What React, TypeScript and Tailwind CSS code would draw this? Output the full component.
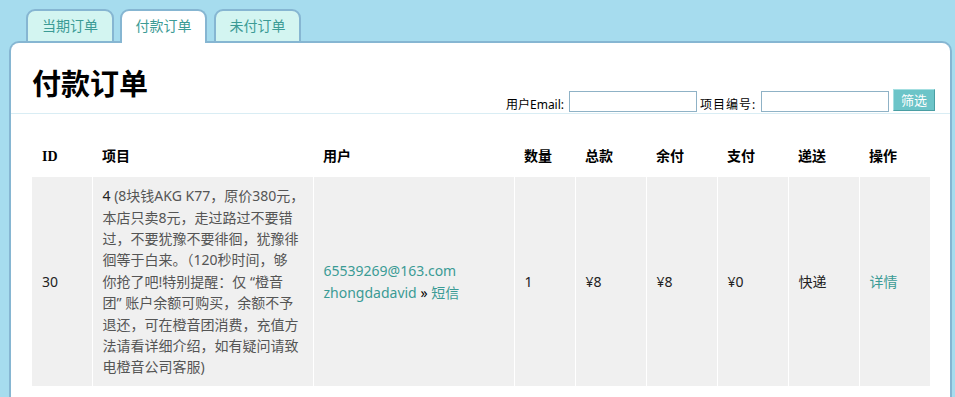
const tabs = [
  { label: "当期订单", active: false, w: "w-[88px]" },
  { label: "付款订单", active: true, w: "w-[87px]" },
  { label: "未付订单", active: false, w: "w-[87px]" },
];

const headers = ["ID", "项目", "用户", "数量", "总款", "余付", "支付", "递送", "操作"];
const widths = ["60px", "221px", "201px", "61px", "71px", "71px", "71px", "71px", "71px"];

const itemLines = [
  "本店只卖8元，走过路过不要错",
  "过，不要犹豫不要徘徊，犹豫徘",
  "徊等于白来。（120秒时间，够",
  "你抢了吧!特别提醒：仅 “橙音",
  "团” 账户余额可购买，余额不予",
  "退还，可在橙音团消费，充值方",
  "法请看详细介绍，如有疑问请致",
  "电橙音公司客服)",
];

const App = () => {
  return (
    <div className="min-h-[397px] bg-[#a6dcee] font-['Noto_Sans','Noto_Sans_CJK_SC',sans-serif] overflow-hidden">
      <div className="relative z-10 flex pl-[26px] pt-[9px] gap-[6px]">
        {tabs.map((t, i) => (
          <div
            key={t.label}
            className={`${t.w} ${i === 2 ? "ml-[1px]" : ""} h-[34px] -mb-[2px] rounded-t-[9px] border-2 border-[#86b6d2] flex items-center justify-center text-[14px] text-[#3b9b95] pb-[1px] ${
              t.active ? "bg-white border-b-0 pb-[3px]" : "bg-[#d3f5f1]"
            }`}
          >
            {t.label}
          </div>
        ))}
      </div>

      <div className="ml-[9px] mr-[3px] min-h-[360px] bg-white border-2 border-b-0 border-[#86b6d2] rounded-t-[10px]">
        <div className="h-[71px] flex justify-between border-b border-[#d9edf4]">
          <h1 className="pl-[21px] pt-[22px] text-[29px] leading-[34px] font-bold text-black font-['Noto_Sans_CJK_SC',serif]">
            付款订单
          </h1>
          <div className="flex items-end pb-[1px] pr-[15px] text-[12px] leading-[14px] text-black">
            <span className="w-[57px] whitespace-nowrap">用户Email:</span>
            <input className="ml-[6px] w-[128px] h-[21px] border border-[#8fb2c6] bg-white outline-none" />
            <span className="ml-[3px] w-[57px] whitespace-nowrap tracking-[1px]">项目编号:</span>
            <input className="ml-[4px] w-[128px] h-[21px] border border-[#8fb2c6] bg-white outline-none" />
            <button className="ml-[4px] mb-[1px] w-[42px] h-[22px] bg-[#6cc4c8] text-white text-[13px] border border-t-[#a4dfe1] border-l-[#a4dfe1] border-r-[#4a9ea3] border-b-[#4a9ea3]">
              筛选
            </button>
          </div>
        </div>

        <table className="ml-[21px] mt-[21px] table-fixed border-collapse w-[898px] text-[14px]">
          <colgroup>
            {widths.map((w, i) => (
              <col key={i} style={{ width: w }} />
            ))}
          </colgroup>
          <thead>
            <tr className="h-[42px]">
              {headers.map((h) => (
                <th
                  key={h}
                  className="text-left pl-[10px] font-bold text-black font-['Liberation_Serif','Noto_Sans_CJK_SC',serif] text-[14px]"
                >
                  {h}
                </th>
              ))}
            </tr>
          </thead>
          <tbody>
            <tr className="bg-[#f0f0f0] h-[209px] align-middle text-[#222]">
              <td className="pl-[10px]">30</td>
              <td className="pl-[10px] py-[8px] border-l border-white text-[#555] whitespace-nowrap">
                <div className="h-[21.4px] leading-[21.4px]">
                  <span className="text-[#222]">4</span> (8块钱AKG K77，原价380元，
                </div>
                {itemLines.map((l, i) => (
                  <div key={i} className="h-[21.4px] leading-[21.4px]">
                    {l}
                  </div>
                ))}
              </td>
              <td className="pl-[10px] border-l border-white leading-[22px]">
                <a className="text-[#3b9b95]">65539269@163.com</a>
                <br />
                <a className="text-[#3b9b95]">zhongdadavid</a> <span className="text-black">»</span>{" "}
                <a className="text-[#3b9b95]">短信</a>
              </td>
              <td className="pl-[10px] border-l border-white">1</td>
              <td className="pl-[10px] border-l border-white">¥8</td>
              <td className="pl-[10px] border-l border-white">¥8</td>
              <td className="pl-[10px] border-l border-white">¥0</td>
              <td className="pl-[10px] border-l border-white text-[#222]">快递</td>
              <td className="pl-[10px] border-l border-white">
                <a className="text-[#3b9b95]">详情</a>
              </td>
            </tr>
          </tbody>
        </table>
      </div>
    </div>
  );
};

export default App;
